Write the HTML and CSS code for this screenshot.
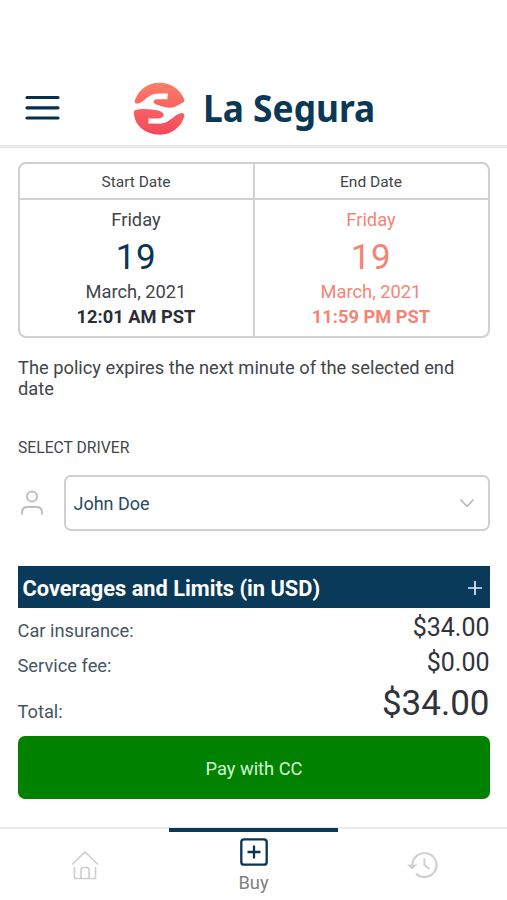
FILE: index.html
```html
<!DOCTYPE html>
<html lang="en">
<head>
<meta charset="utf-8">
<meta name="viewport" content="width=device-width, initial-scale=1">
<title>La Segura</title>
<link rel="stylesheet" href="styles.css">
</head>
<body>
<header class="header">
  <svg class="menu" viewBox="0 0 36 26"><path d="M2 2.500h31M2 12.800h31M2 23h31"/></svg>
  <div class="brand">
    <svg class="logo" viewBox="400 36 156 160">
      <defs><linearGradient id="coral" gradientUnits="userSpaceOnUse" x1="0" y1="38" x2="0" y2="195"><stop offset="0" stop-color="#ff7d69"/><stop offset="1" stop-color="#f3485b"/></linearGradient></defs>
      <path fill="url(#coral)" d="M405 92C417 58 444 38 480 38C513 38 543 58 554 88Q556 96 549 99C535 106 526 115 509 114C493 113 482 107 470 104C459 101 459 89 470 88L503 88L505 71L479 71C452 71 443 85 430 93Q416 104 407 100Q403 98 405 92Z"/>
      <path fill="url(#coral)" d="M402 126C404 116 437 116 463 120C481 122 491 127 492 135C492 144 480 147 466 146L446 146L446 161C463 161 482 164 498 158C514 151 526 135 543 130Q557 128 554 141C543 174 516 195 481 195C433 195 402 164 402 126Z"/>
    </svg>
    <span class="wordmark">La Segura</span>
  </div>
</header>
<main class="content">
  <section class="dates">
    <div class="date">
      <div class="date-title">Start Date</div>
      <div class="date-body"><div class="text">Friday</div><div class="day">19</div><div class="text month">March, 2021</div><div class="time">12:01 AM PST</div></div>
    </div>
    <div class="date end">
      <div class="date-title">End Date</div>
      <div class="date-body"><div class="text">Friday</div><div class="day">19</div><div class="text month">March, 2021</div><div class="time">11:59 PM PST</div></div>
    </div>
  </section>
  <p class="notice">The policy expires the next minute of the selected end date</p>
  <div class="label">SELECT DRIVER</div>
  <div class="driver">
    <svg class="person" viewBox="0 0 24 28"><circle cx="12" cy="7.500" r="5"/><path d="M2 25.500v-2q0-5.500 5.500-5.500h9q5.500 0 5.500 5.500v2"/></svg>
    <div class="select"><span>John Doe</span><svg class="chevron" viewBox="0 0 16 10"><path d="M1.500 1.500 8 8.300 14.500 1.500"/></svg></div>
  </div>
  <div class="coverage"><span>Coverages and Limits (in USD)</span><svg class="plus" viewBox="0 0 14 14"><path d="M7 0v14M0 7h14"/></svg></div>
  <div class="row"><span>Car insurance:</span><span class="price">$34.00</span></div>
  <div class="row"><span>Service fee:</span><span class="price">$0.00</span></div>
  <div class="row total"><span>Total:</span><span class="price">$34.00</span></div>
  <button class="pay">Pay with CC</button>
</main>
<nav class="tabs">
  <div class="tab"><svg class="home" viewBox="0 0 28 30"><path d="M1 14.500 14 2l13 12.500M3.500 17v11.500h21V17M10 28.500V20q0-2.500 2.500-2.500h3q2.500 0 2.500 2.500v8.500"/></svg></div>
  <div class="tab active"><svg class="buy" viewBox="0 0 28 28"><rect x="1.300" y="1.300" width="25.400" height="25.400" rx="2.800"/><path d="M14 7.500v13M7.500 14h13"/></svg><span>Buy</span></div>
  <div class="tab"><svg class="history" viewBox="0 0 31 28"><path d="M5.500 14A12 12 0 1 1 9 22.500M9 22.500A12 12 0 0 0 13 25M17.500 7.500V14l5 4"/><path class="head" d="M0 13.500h10.500L5.300 18.500z"/></svg></div>
</nav>
</body>
</html>
```
FILE: styles.css
```css
* { box-sizing: border-box; }
body { margin: 0; height: 900px; overflow: hidden; display: flex; flex-direction: column; background: #fff; color: #42454a; font-family: Roboto, sans-serif; font-size: 18.300px; }
svg { display: block; fill: none; flex: none; overflow: visible; }
.header { height: 148px; flex: none; padding: 82px 0 0 25px; display: flex; border-bottom: 3px solid #eaeaea; }
.menu { width: 36px; height: 26px; margin-top: 13px; stroke: #06304c; stroke-width: 3.200; stroke-linecap: round; }
.brand { display: flex; margin-left: 72px; }
.logo { width: 52px; height: 53px; }
.wordmark { margin-left: 18px; font: bold 38px/50px "Noto Sans", sans-serif; color: #0a3856; white-space: nowrap; transform: scaleX(.93); transform-origin: left; }
.content { padding: 14px 17.500px 0; flex: 1; }
.dates { height: 176px; display: flex; border: 2px solid #cfd1d1; border-radius: 8px; text-align: center; }
.date { flex: 1; }
.date + .date { border-left: 2px solid #d0d2d2; }
.date-title { height: 36px; line-height: 36px; font-size: 15.500px; border-bottom: 2px solid #d0d2d2; }
.text { line-height: 22px; }
.date-body { padding-top: 9px; }
.day { font-size: 35px; line-height: 54px; height: 50px; color: #0a3553; letter-spacing: .5px; }
.time { font-weight: bold; line-height: 28px; color: #2b2d35; }
.end .date-body, .end .day, .end .time { color: #f58476; }
.notice { margin: 19px 0 0; line-height: 21px; padding-left: .5px; }
.label { margin-top: 39px; font-size: 15.700px; line-height: 20px; padding-left: .5px; }
.driver { display: flex; align-items: center; margin-top: 17px; }
.person { width: 24px; height: 28px; margin-left: 2.500px; stroke: #bebebe; stroke-width: 2; }
.select { margin-left: 19.500px; height: 56px; flex: 1; padding: 0 13px 0 8px; border: 2px solid #cfd1d1; border-radius: 7px; display: flex; align-items: center; justify-content: space-between; color: #294a62; font-size: 18px; }
.chevron { width: 16px; height: 10px; stroke: #b9b9b9; stroke-width: 1.700; }
.coverage { height: 42px; margin-top: 35px; padding: 2px 8px 0 5px; display: flex; align-items: center; justify-content: space-between; background: #0a3a59; color: #fff; font-size: 21.800px; font-weight: bold; }
.plus { width: 14px; height: 14px; stroke: #dfedf5; stroke-width: 1.700; }
.row { display: flex; justify-content: space-between; height: 34.500px; line-height: 45px; color: #465663; }
.price { font-size: 25px; line-height: 40px; color: #30333b; }
.total { height: 59px; line-height: 70px; }
.total .price { font-size: 35px; line-height: 53px; }
.pay { display: block; width: 100%; height: 63px; padding: 2px 0 0 1px; border: 0; border-radius: 7px; background: #008200; color: #d3f8d3; font: 18.300px Roboto, sans-serif; }
.tabs { height: 73px; flex: none; display: flex; border-top: 2px solid #ebebeb; }
.tab { flex: 1; display: flex; flex-direction: column; align-items: center; }
.active { margin-top: -1px; border-top: 4px solid #0a3855; color: #808080; line-height: 24px; }
.home { width: 28px; height: 30px; margin-top: 21px; stroke: #d0d0d0; stroke-width: 1.700; }
.buy { width: 28px; height: 28px; margin: 6px 0 5px; stroke: #0a3452; stroke-width: 2.300; }
.history { width: 31px; height: 28px; margin-top: 22px; stroke: #d0d0d0; stroke-width: 2.200; }
.history .head { fill: #d0d0d0; stroke: none; }
```
